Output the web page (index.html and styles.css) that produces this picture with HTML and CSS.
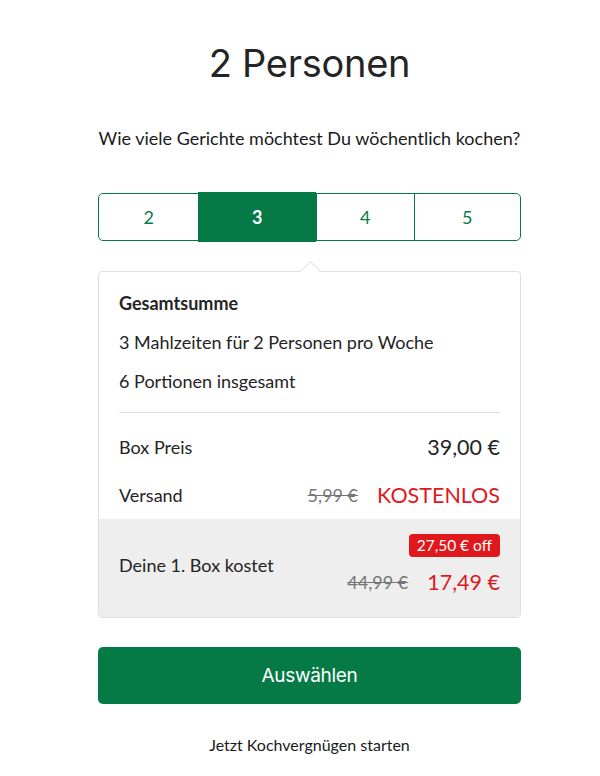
FILE: index.html
```html
<!DOCTYPE html>
<html lang="de">
<head>
  <meta charset="UTF-8" />
  <meta name="viewport" content="width=device-width, initial-scale=1.0" />
  <title>Box auswählen</title>
  <link rel="stylesheet" href="styles.css">
</head>
<body>

  <div class="plan-container">
    <h1 class="plan-title">2 Personen</h1>
    <p class="plan-question">Wie viele Gerichte möchtest Du wöchentlich kochen?</p>

    <div class="meal-picker">
      <button class="meal-option">2</button>
      <button class="meal-option active">3</button>
      <button class="meal-option">4</button>
      <button class="meal-option">5</button>
    </div>

    <div class="summary-card">
      <div class="summary-top">
        <h3>Gesamtsumme</h3>
        <p>3 Mahlzeiten für 2 Personen pro Woche</p>
        <p>6 Portionen insgesamt</p>
        <div class="divider"></div>
        <div class="price-rows">
          <div class="price-row">
            <span>Box Preis</span>
            <span class="price">39,00 €</span>
          </div>
          <div class="price-row">
            <span>Versand</span>
            <span class="price-group">
              <s class="old-price">5,99 €</s>
              <span class="price red">KOSTENLOS</span>
            </span>
          </div>
        </div>
      </div>
      <div class="summary-bottom">
        <span>Deine 1. Box kostet</span>
        <div class="first-box">
          <span class="badge">27,50 € off</span>
          <span class="price-group">
            <s class="old-price">44,99 €</s>
            <span class="price red">17,49 €</span>
          </span>
        </div>
      </div>
    </div>

    <button class="select-btn">Auswählen</button>
    <p class="start-text">Jetzt Kochvergnügen starten</p>
  </div>

</body>
</html>
```

FILE: styles.css
```css
/* Global Styles */
* {
  box-sizing: border-box;
  margin: 0;
  padding: 0;
}
body {
  font-family: Lato, "Open Sans", sans-serif;
  color: #242424;
  background: #fff;
}

.plan-container {
  width: 423px;
  margin-left: 98px;
  padding-top: 39px;
  display: flex;
  flex-direction: column;
}

.plan-title {
  font-family: Inter, Roboto, sans-serif;
  font-weight: 400;
  font-size: 38px;
  letter-spacing: -0.3px;
  text-align: center;
  line-height: 48px;
}
.plan-question {
  font-size: 18px;
  text-align: center;
  margin-top: 39px;
  line-height: 24px;
  color: #1a1a1a;
}

/* Segmented picker */
.meal-picker {
  margin-top: 43px;
  height: 48px;
  display: grid;
  grid-template-columns: 100fr 118fr 98fr 107fr;
  border: 1px solid #067a46;
  border-radius: 5px;
}
.meal-option {
  background: #fff;
  border: none;
  border-left: 1px solid #067a46;
  color: #067a46;
  font-family: inherit;
  font-size: 18px;
  cursor: pointer;
}
.meal-option:first-child {
  border-left: none;
  border-radius: 5px 0 0 5px;
}
.meal-option:last-child {
  border-radius: 0 5px 5px 0;
}
.meal-option.active {
  background: #067a46;
  color: #fff;
  font-weight: bold;
  margin: -2px 0 -2px -1px;
}

/* Summary card */
.summary-card {
  position: relative;
  margin-top: 30px;
  border: 1px solid #e0e0e0;
  border-radius: 4px;
  font-size: 18px;
}
.summary-card::before {
  content: "";
  position: absolute;
  top: -8px;
  left: 204px;
  width: 14px;
  height: 14px;
  background: #fff;
  border-top: 1px solid #e0e0e0;
  border-left: 1px solid #e0e0e0;
  transform: rotate(45deg);
}
.summary-top {
  padding: 19px 20px 0;
}
.summary-top h3 {
  font-size: 18px;
  font-weight: bold;
  line-height: 24px;
}
.summary-top p {
  margin-top: 15px;
  line-height: 24px;
}
.divider {
  height: 1px;
  background: #e0e0e0;
  margin-top: 19px;
}
.price-rows {
  margin-top: 10px;
}
.price-row {
  display: flex;
  justify-content: space-between;
  align-items: center;
  height: 48px;
}
.price {
  font-size: 21.5px;
}
.red {
  color: #e0181c;
}
.price-group {
  display: flex;
  align-items: center;
  gap: 19px;
}
.old-price {
  color: #757575;
  font-size: 18px;
}

.summary-bottom {
  background: #eeeeee;
  padding: 15px 20px 22px;
  display: flex;
  justify-content: space-between;
  align-items: center;
}
.first-box {
  display: flex;
  flex-direction: column;
  align-items: flex-end;
  gap: 12px;
}
.badge {
  background: #e0181c;
  color: #fff;
  font-size: 15.5px;
  padding: 2px 8px;
  border-radius: 4px;
  line-height: 19px;
}

.select-btn {
  margin-top: 29px;
  height: 57px;
  background: #067a46;
  color: #fff;
  border: none;
  border-radius: 5px;
  font-family: Inter, Roboto, sans-serif;
  font-size: 19px;
  letter-spacing: -0.3px;
  cursor: pointer;
}
.start-text {
  margin-top: 31px;
  text-align: center;
  font-size: 16px;
  color: #1a1a1a;
}
```
